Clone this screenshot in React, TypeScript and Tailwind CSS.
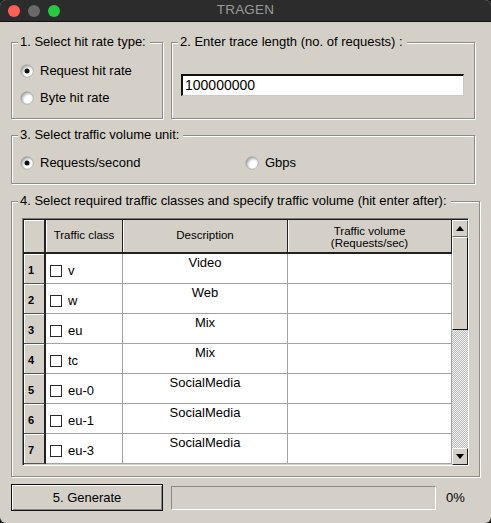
import React from "react";

function Radio({ checked, id }: { checked: boolean; id: string }) {
  return (
    <svg width="14" height="14" viewBox="0 0 14 14" className="shrink-0">
      <defs>
        <radialGradient id={id} cx="64%" cy="64%" r="64%">
          <stop offset="0.5" stopColor="#ffffff" />
          <stop offset="1" stopColor="#a9a9a9" />
        </radialGradient>
      </defs>
      <circle cx="7" cy="7" r="6.2" fill={`url(#${id})`} stroke="#9a9a9a" strokeWidth="0.6" />
      {checked && <circle cx="7" cy="7" r="2.5" fill="#111" />}
    </svg>
  );
}

function Group({
  label,
  className,
  children,
}: {
  label: string;
  className: string;
  children?: React.ReactNode;
}) {
  return (
    <div
      className={`relative border border-[#8e8b86] shadow-[1px_1px_0_#ffffff,inset_1px_1px_0_#ffffff] ${className}`}
    >
      <span className="absolute left-[6px] top-[-9px] bg-[#d4d0c8] pl-[2px] pr-[4px] text-[13px] leading-[16px] whitespace-nowrap">
        {label}
      </span>
      {children}
    </div>
  );
}

const rows: [string, string][] = [
  ["v", "Video"],
  ["w", "Web"],
  ["eu", "Mix"],
  ["tc", "Mix"],
  ["eu-0", "SocialMedia"],
  ["eu-1", "SocialMedia"],
  ["eu-3", "SocialMedia"],
];

function Arrow({ up }: { up: boolean }) {
  return (
    <svg width="8" height="5" viewBox="0 0 8 5">
      {up ? <polygon points="0,5 8,5 4,0" fill="#000" /> : <polygon points="0,0 8,0 4,5" fill="#000" />}
    </svg>
  );
}

export default function App() {
  return (
    <div className="w-[491px] h-[523px] bg-[#1e1e1e] font-['Liberation_Sans',Arial,sans-serif] text-black">
      <div className="w-full h-full rounded-[6px] overflow-hidden bg-[#d4d0c8] flex flex-col">
        {/* Title bar */}
        <div className="h-[22px] shrink-0 bg-[#2c2c2c] border-b border-[#111] grid grid-cols-[1fr_auto_1fr] items-center">
          <div className="flex gap-[8px] pl-[8px]">
            <div className="w-[12px] h-[12px] rounded-full bg-[#fe5f57]" />
            <div className="w-[12px] h-[12px] rounded-full bg-[#6a6a6a]" />
            <div className="w-[12px] h-[12px] rounded-full bg-[#28c840]" />
          </div>
          <div className="text-[13.5px] text-[#9a9a9a] tracking-[0.2px]">TRAGEN</div>
          <div />
        </div>

        <div className="flex flex-col px-[11px]">
          {/* Row 1 */}
          <div className="mt-[20px] flex h-[77px]">
            <Group label="1. Select hit rate type:" className="w-[152px] h-[77px]">
              <div className="flex flex-col pt-[20px] pl-[8px] gap-[11px] text-[13px]">
                <div className="flex items-center h-[16px] gap-[6px]">
                  <Radio checked id="r1" />
                  <span>Request hit rate</span>
                </div>
                <div className="flex items-center h-[16px] gap-[6px]">
                  <Radio checked={false} id="r2" />
                  <span>Byte hit rate</span>
                </div>
              </div>
            </Group>
            <Group label="2. Enter trace length (no. of requests) :" className="ml-[8px] w-[304px] h-[77px]">
              <div className="pt-[31px] pl-[9px]">
                <div className="w-[283px] h-[22px] bg-white border-t-2 border-l-2 border-[#111] border-r border-b border-r-[#c9c9c9] border-b-[#c9c9c9] flex items-center pl-[2px] text-[14px]">
                  100000000
                </div>
              </div>
            </Group>
          </div>

          {/* Box 3 */}
          <Group label="3. Select traffic volume unit:" className="mt-[16px] w-[464px] h-[49px]">
            <div className="flex pt-[19px] pl-[8px] text-[13px]">
              <div className="flex items-center h-[16px] gap-[6px] w-[225px]">
                <Radio checked id="r3" />
                <span>Requests/second</span>
              </div>
              <div className="flex items-center h-[16px] gap-[6px]">
                <Radio checked={false} id="r4" />
                <span>Gbps</span>
              </div>
            </div>
          </Group>

          {/* Box 4 */}
          <Group
            label="4. Select required traffic classes and specify traffic volume (hit enter after):"
            className="mt-[17px] w-[469px] h-[276px]"
          >
            <div className="pt-[16px] pl-[10px]">
              <div className="w-[447px] h-[248px] border border-t-[#7c7c7c] border-l-[#7c7c7c] border-r-white border-b-white">
                <div className="flex h-[246px] overflow-hidden border-t border-l border-[#1a1a1a]">
                  {/* Table */}
                  <div className="grid grid-cols-[22px_77px_165px_164px] auto-rows-[30px] grid-rows-[34px] content-start text-[13px]">
                    <div className="h-[34px] bg-[#d4d0c8] border-r-2 border-b-2 border-[#222] shadow-[inset_1px_1px_0_#ffffff]" />
                    <div className="h-[34px] bg-[#d4d0c8] border-r border-b-2 border-[#222] shadow-[inset_1px_0_0_#ffffff] flex items-center justify-center text-[11.5px]">
                      Traffic class
                    </div>
                    <div className="h-[34px] bg-[#d4d0c8] border-r border-b-2 border-[#222] shadow-[inset_1px_0_0_#ffffff] flex items-center justify-center text-[11.5px]">
                      Description
                    </div>
                    <div className="h-[34px] bg-[#d4d0c8] border-r border-b-2 border-[#222] shadow-[inset_1px_0_0_#ffffff] flex flex-col items-center justify-center text-[11.5px] leading-[12px] pt-[1px]">
                      <span>Traffic volume</span>
                      <span>(Requests/sec)</span>
                    </div>
                    {rows.map(([cls, desc], i) => (
                      <React.Fragment key={i}>
                        <div className="bg-[#d4d0c8] border-r-2 border-b border-r-[#222] border-b-[#555] shadow-[inset_1px_1px_0_#ffffff] flex items-center pl-[4px] pt-[3px] text-[11px] font-bold">
                          {i + 1}
                        </div>
                        <div className="bg-white border-r border-b border-[#a3a3a3] flex items-center pl-[4px] pt-[4px] gap-[6px]">
                          <div className="w-[12px] h-[12px] border border-[#2a2a2a] bg-white" />
                          <span>{cls}</span>
                        </div>
                        <div className="bg-white border-r border-b border-[#a3a3a3] flex justify-center pt-[1px] leading-[16px]">
                          {desc}
                        </div>
                        <div className="bg-white border-r border-b border-[#a3a3a3]" />
                      </React.Fragment>
                    ))}
                  </div>
                  {/* Scrollbar */}
                  <div className="w-[16px] h-full flex flex-col bg-[image:repeating-conic-gradient(#b9b9b9_0%_25%,#f2f2f2_0%_50%)] bg-[length:2px_2px]">
                    <div className="h-[17px] shrink-0 bg-[#d4d0c8] border border-t-white border-l-white border-r-[#6a6a6a] border-b-[#6a6a6a] flex items-center justify-center">
                      <Arrow up />
                    </div>
                    <div className="h-[93px] shrink-0 bg-[#d4d0c8] border border-t-white border-l-white border-r-[#111] border-b-[#111]" />
                    <div className="flex-1" />
                    <div className="h-[17px] shrink-0 bg-[#d4d0c8] border border-t-white border-l-white border-r-[#222] border-b-[#222] flex items-center justify-center">
                      <Arrow up={false} />
                    </div>
                  </div>
                </div>
              </div>
            </div>
          </Group>

          {/* Bottom row */}
          <div className="mt-[7px] flex items-center">
            <div className="w-[152px] h-[27px] border border-[#111] bg-[#d4d0c8] shadow-[inset_1px_1px_0_#ffffff,inset_-1px_-1px_0_#8a8a8a] flex items-center justify-center text-[13px]">
              5. Generate
            </div>
            <div className="ml-[8px] w-[265px] h-[24px] border border-t-[#8a8a8a] border-l-[#8a8a8a] border-r-white border-b-white" />
            <span className="ml-[10px] text-[13px]">0%</span>
          </div>
        </div>
      </div>
    </div>
  );
}
